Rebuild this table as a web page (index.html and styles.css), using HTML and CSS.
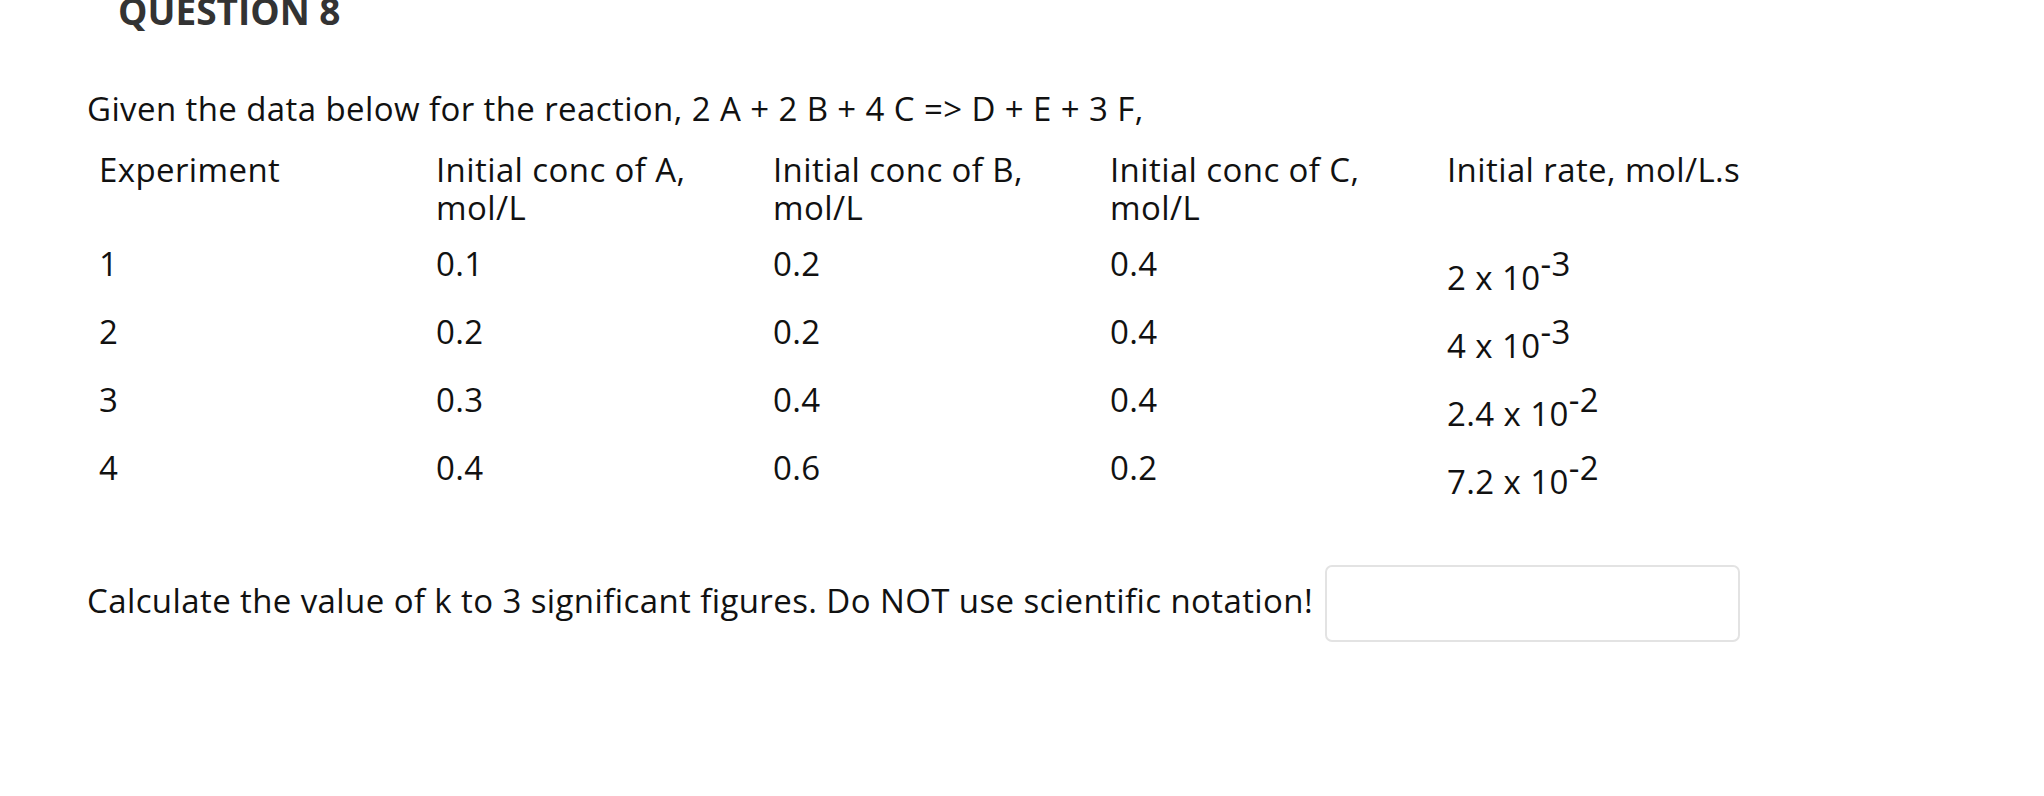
FILE: index.html
```html
<!DOCTYPE html>
<html lang="en">
<head>
<meta charset="utf-8">
<title>Question 8</title>
<link rel="stylesheet" href="styles.css">
</head>
<body>
<main class="question">
  <h2 class="q-title">QUESTION 8</h2>
  <p class="intro">Given the data below for the reaction, 2 A + 2 B + 4 C =&gt; D + E + 3 F,</p>
  <table class="data">
    <colgroup><col><col><col><col><col></colgroup>
    <tbody>
      <tr class="head">
        <td>Experiment</td>
        <td>Initial conc of A, mol/L</td>
        <td>Initial conc of B, mol/L</td>
        <td>Initial conc of C, mol/L</td>
        <td>Initial rate, mol/L.s</td>
      </tr>
      <tr>
        <td>1</td><td>0.1</td><td>0.2</td><td>0.4</td>
        <td>2 x 10<sup>-3</sup></td>
      </tr>
      <tr>
        <td>2</td><td>0.2</td><td>0.2</td><td>0.4</td>
        <td>4 x 10<sup>-3</sup></td>
      </tr>
      <tr>
        <td>3</td><td>0.3</td><td>0.4</td><td>0.4</td>
        <td>2.4 x 10<sup>-2</sup></td>
      </tr>
      <tr>
        <td>4</td><td>0.4</td><td>0.6</td><td>0.2</td>
        <td>7.2 x 10<sup>-2</sup></td>
      </tr>
    </tbody>
  </table>
  <div class="answer-row">
    <label class="prompt" for="k">Calculate the value of k to 3 significant figures. Do NOT use scientific notation!</label>
    <input class="answer" id="k" type="text">
  </div>
</main>
</body>
</html>
```
FILE: styles.css
```css
html, body {
  margin: 0;
  padding: 0;
  background: #ffffff;
}

body {
  font-family: "Open Sans", "Liberation Sans", sans-serif;
  color: #111111;
  width: 2044px;
  height: 796px;
  overflow: hidden;
}

.question {
  padding-left: 87px;
}

.q-title {
  margin: -7px 0 0 31px;
  font-size: 37px;
  line-height: 36px;
  font-weight: 700;
  color: #333333;
}

.intro,
.data,
.prompt {
  font-size: 33px;
  line-height: 38px;
  letter-spacing: 0.4px;
}

.intro {
  margin: 61px 0 0 0;
}

.data {
  margin-top: 15px;
  border-collapse: collapse;
  table-layout: fixed;
  width: 1685px;
}

.data col {
  width: 337px;
}

.data td {
  padding: 8px 12px;
  vertical-align: top;
  text-align: left;
}

.data .head td {
  padding-bottom: 10px;
}

.data sup {
  font-size: 1em;
  line-height: 38px;
  vertical-align: 14px;
}

.answer-row {
  margin-top: 56px;
  display: flex;
  align-items: center;
  gap: 12px;
}

.prompt {
  margin-bottom: 5px;
}

.answer {
  box-sizing: border-box;
  width: 415px;
  height: 77px;
  margin: 0;
  border: 2px solid #e3e3e3;
  border-radius: 7px;
  background: #ffffff;
  outline: none;
}
```
